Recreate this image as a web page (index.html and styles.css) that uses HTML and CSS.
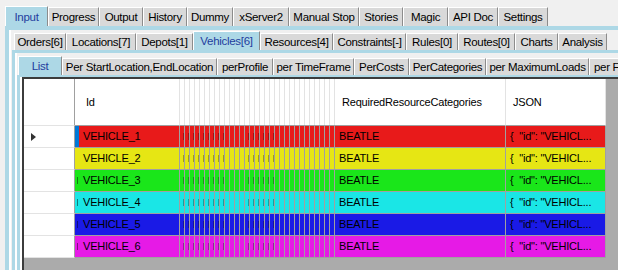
FILE: index.html
```html
<!DOCTYPE html>
<html lang="en">
<head>
    <meta charset="UTF-8">
    <title>Vehicles</title>
    <link rel="stylesheet" href="styles.css">
</head>
<body>
<div class="tabctl lvl1">
    <div class="strip">
        <div class="tab active">Input</div>
        <div class="tab">Progress</div>
        <div class="tab">Output</div>
        <div class="tab">History</div>
        <div class="tab">Dummy</div>
        <div class="tab">xServer2</div>
        <div class="tab">Manual Stop</div>
        <div class="tab">Stories</div>
        <div class="tab">Magic</div>
        <div class="tab">API Doc</div>
        <div class="tab">Settings</div>
    </div>
    <div class="page">
        <div class="tabctl lvl2">
            <div class="strip">
                <div class="tab">Orders[6]</div>
                <div class="tab">Locations[7]</div>
                <div class="tab">Depots[1]</div>
                <div class="tab active">Vehicles[6]</div>
                <div class="tab">Resources[4]</div>
                <div class="tab">Constraints[-]</div>
                <div class="tab">Rules[0]</div>
                <div class="tab">Routes[0]</div>
                <div class="tab">Charts</div>
                <div class="tab">Analysis</div>
            </div>
            <div class="page">
                <div class="tabctl lvl3">
                    <div class="strip">
                        <div class="tab active">List</div>
                        <div class="tab">Per StartLocation,EndLocation</div>
                        <div class="tab">perProfile</div>
                        <div class="tab">per TimeFrame</div>
                        <div class="tab">PerCosts</div>
                        <div class="tab">PerCategories</div>
                        <div class="tab">per MaximumLoads</div>
                        <div class="tab">per FixedCosts</div>
                    </div>
                    <div class="page">
                        <div class="gridwrap">
                            <div class="grid">
                                <div class="row head">
                                    <div class="rh"></div>
                                    <div class="c pre"></div>
                                    <div class="c id">Id</div>
                                    <div class="c narrow"></div>
                                    <div class="c cat">RequiredResourceCategories</div>
                                    <div class="c json">JSON</div>
                                </div>
                                <div class="row red">
                                    <div class="rh current"></div>
                                    <div class="c pre sel"></div>
                                    <div class="c id">VEHICLE_1</div>
                                    <div class="c narrow"><span class="mk a"></span><span class="mk b"></span></div>
                                    <div class="c cat">BEATLE</div>
                                    <div class="c json">{  "id": "VEHICL...</div>
                                </div>
                                <div class="row yellow">
                                    <div class="rh"></div>
                                    <div class="c pre"></div>
                                    <div class="c id">VEHICLE_2</div>
                                    <div class="c narrow"><span class="mk a"></span><span class="mk b"></span></div>
                                    <div class="c cat">BEATLE</div>
                                    <div class="c json">{  "id": "VEHICL...</div>
                                </div>
                                <div class="row green">
                                    <div class="rh"></div>
                                    <div class="c pre"><span class="clip"></span></div>
                                    <div class="c id">VEHICLE_3</div>
                                    <div class="c narrow"><span class="mk a"></span><span class="mk b"></span></div>
                                    <div class="c cat">BEATLE</div>
                                    <div class="c json">{  "id": "VEHICL...</div>
                                </div>
                                <div class="row cyan">
                                    <div class="rh"></div>
                                    <div class="c pre"><span class="clip"></span></div>
                                    <div class="c id">VEHICLE_4</div>
                                    <div class="c narrow"><span class="mk a"></span><span class="mk b"></span></div>
                                    <div class="c cat">BEATLE</div>
                                    <div class="c json">{  "id": "VEHICL...</div>
                                </div>
                                <div class="row blue">
                                    <div class="rh"></div>
                                    <div class="c pre"><span class="clip"></span></div>
                                    <div class="c id">VEHICLE_5</div>
                                    <div class="c narrow"><span class="mk a"></span><span class="mk b"></span></div>
                                    <div class="c cat">BEATLE</div>
                                    <div class="c json">{  "id": "VEHICL...</div>
                                </div>
                                <div class="row magenta">
                                    <div class="rh"></div>
                                    <div class="c pre"><span class="clip"></span></div>
                                    <div class="c id">VEHICLE_6</div>
                                    <div class="c narrow"><span class="mk a"></span><span class="mk b"></span></div>
                                    <div class="c cat">BEATLE</div>
                                    <div class="c json">{  "id": "VEHICL...</div>
                                </div>
                            </div>
                        </div>
                    </div>
                </div>
            </div>
        </div>
    </div>
</div>
</body>
</html>
```

FILE: styles.css
```css
body {
    margin: 0;
    width: 618px;
    height: 270px;
    overflow: hidden;
    display: flex;
    flex-direction: column;
    background: #f0f0f0;
    font-family: "Liberation Sans", Arial, sans-serif;
    font-size: 11px;
    letter-spacing: -0.2px;
    color: #000;
}

/* tab controls */
.tabctl {
    flex: 1;
    display: flex;
    flex-direction: column;
    min-width: 0;
}

.strip {
    display: flex;
    align-items: flex-end;
    flex-shrink: 0;
    white-space: nowrap;
}

.tab {
    flex: 0 0 auto;
    box-sizing: border-box;
    display: flex;
    align-items: center;
    justify-content: center;
    overflow: hidden;
    font-size: 11.5px;
    letter-spacing: -0.3px;
    background: #d9d9d9;
    border: 1px solid #fff;
    border-right-color: #8c8c8c;
    border-bottom: none;
}

.tab.active {
    background: #add8e6;
    color: #1f3d9e;
}

.lvl1 > .strip > .tab:nth-child(1) { width: 43px; }
.lvl1 > .strip > .tab:nth-child(2) { width: 51px; }
.lvl1 > .strip > .tab:nth-child(3) { width: 44px; }
.lvl1 > .strip > .tab:nth-child(4) { width: 44px; }
.lvl1 > .strip > .tab:nth-child(5) { width: 46px; }
.lvl1 > .strip > .tab:nth-child(6) { width: 56px; }
.lvl1 > .strip > .tab:nth-child(7) { width: 70px; }
.lvl1 > .strip > .tab:nth-child(8) { width: 44px; }
.lvl1 > .strip > .tab:nth-child(9) { width: 45px; }
.lvl1 > .strip > .tab:nth-child(10) { width: 50px; }
.lvl1 > .strip > .tab:nth-child(11) { width: 50px; }

.lvl2 > .strip > .tab:nth-child(1) { width: 52px; }
.lvl2 > .strip > .tab:nth-child(2) { width: 70px; }
.lvl2 > .strip > .tab:nth-child(3) { width: 57px; }
.lvl2 > .strip > .tab:nth-child(4) { width: 67px; }
.lvl2 > .strip > .tab:nth-child(5) { width: 73px; }
.lvl2 > .strip > .tab:nth-child(6) { width: 73px; }
.lvl2 > .strip > .tab:nth-child(7) { width: 52px; }
.lvl2 > .strip > .tab:nth-child(8) { width: 57px; }
.lvl2 > .strip > .tab:nth-child(9) { width: 43px; }
.lvl2 > .strip > .tab:nth-child(10) { width: 49px; }

.lvl3 > .strip > .tab:nth-child(1) { width: 44px; }
.lvl3 > .strip > .tab:nth-child(2) { width: 155px; }
.lvl3 > .strip > .tab:nth-child(3) { width: 56px; }
.lvl3 > .strip > .tab:nth-child(4) { width: 81px; }
.lvl3 > .strip > .tab:nth-child(5) { width: 55px; }
.lvl3 > .strip > .tab:nth-child(6) { width: 77px; }
.lvl3 > .strip > .tab:nth-child(7) { width: 103px; }
.lvl3 > .strip > .tab:nth-child(8) { width: 90px; justify-content: flex-start; padding-left: 4px; }

.page {
    flex: 1;
    display: flex;
    flex-direction: column;
    background: #add8e6;
}

.lvl1 {
    margin-left: 5px;
    padding-top: 6px;
}

.lvl1 > .strip {
    height: 20px;
}

.lvl1 > .strip > .tab {
    height: 19px;
}

.lvl1 > .strip > .tab.active {
    height: 20px;
}

.lvl1 > .page {
    padding: 4px 0 0 4px;
}

.lvl2 {
    border-left: 2px solid #fff;
    background: #f0f0f0;
}

.lvl2 > .strip {
    height: 19px;
    padding: 1px 0 0 3px;
}

.lvl2 > .strip > .tab,
.lvl3 > .strip > .tab {
    height: 17px;
}

.lvl2 > .strip > .tab.active,
.lvl3 > .strip > .tab.active {
    height: 19px;
}

.lvl2 > .page {
    margin-left: 1px;
    padding: 3px 0 0 3px;
}

.lvl3 {
    border-left: 2px solid #fff;
    background: #f0f0f0;
}

.lvl3 > .strip {
    height: 19px;
    padding: 3px 0 0 1px;
}

.lvl3 > .page {
    padding: 2px 0 0 3px;
}

/* data grid */
.gridwrap {
    flex: 1;
    display: flex;
    flex-direction: column;
    border-left: 2px solid #fff;
}

.grid {
    flex: 1;
    background: #ababab;
    border-top: 2px solid #3c3c3c;
    border-left: 2px solid #3c3c3c;
}

.row {
    display: flex;
    height: 22px;
}

.row.head {
    height: 47px;
}

.rh {
    flex: 0 0 50px;
    position: relative;
    background: #fff;
    border-right: 1px solid #a0a0a0;
    border-bottom: 1px solid #e3e3e3;
}

.rh.current::after {
    content: "";
    position: absolute;
    left: 7px;
    top: 7px;
    border-left: 5px solid #333;
    border-top: 4px solid transparent;
    border-bottom: 4px solid transparent;
}

.c {
    flex: 0 0 auto;
    box-sizing: border-box;
    height: 22px;
    padding-left: 4px;
    line-height: 21px;
    overflow: hidden;
    white-space: pre;
    border-right: 1px solid #a0a0a0;
    border-bottom: 1px solid #a0a0a0;
}

.head .c {
    height: 47px;
    line-height: 46px;
    padding-left: 7px;
    background: #fff;
    border-right-color: #e3e3e3;
}

.pre {
    width: 4px;
    display: flex;
    align-items: center;
    padding: 0 0 0 2px;
    border-right: none;
}

.head .pre {
    padding: 0;
}

.pre.sel {
    background: #0078d7 !important;
}

/* the last pixels of a clipped value */
.clip {
    width: 1px;
    height: 7px;
    background: rgba(0, 0, 0, 0.45);
}

.id {
    width: 101px;
}

.narrow {
    width: 155px;
    padding: 0;
    display: flex;
    align-items: center;
    border-right: none;
    background-image: repeating-linear-gradient(to right, transparent 0 4px, #a0a0a0 4px 5px);
}

.head .narrow {
    padding: 0;
    background-image: repeating-linear-gradient(to right, transparent 0 4px, #e3e3e3 4px 5px);
}

.mk {
    height: 7px;
    background: repeating-linear-gradient(to right, transparent 0 3px, rgba(0, 0, 0, 0.3) 3px 4px, transparent 4px 5px);
}

.mk.a {
    width: 45px;
}

.mk.b {
    width: 30px;
    margin-left: 20px;
}

.cat {
    width: 171px;
}

.json {
    width: 100px;
}

.red .c { background-color: #e81a1a; }
.yellow .c { background-color: #e6e614; }
.green .c { background-color: #1ae61a; }
.cyan .c { background-color: #1ae6e6; }
.blue .c { background-color: #1a1ae6; }
.magenta .c { background-color: #e61ae6; }
```
